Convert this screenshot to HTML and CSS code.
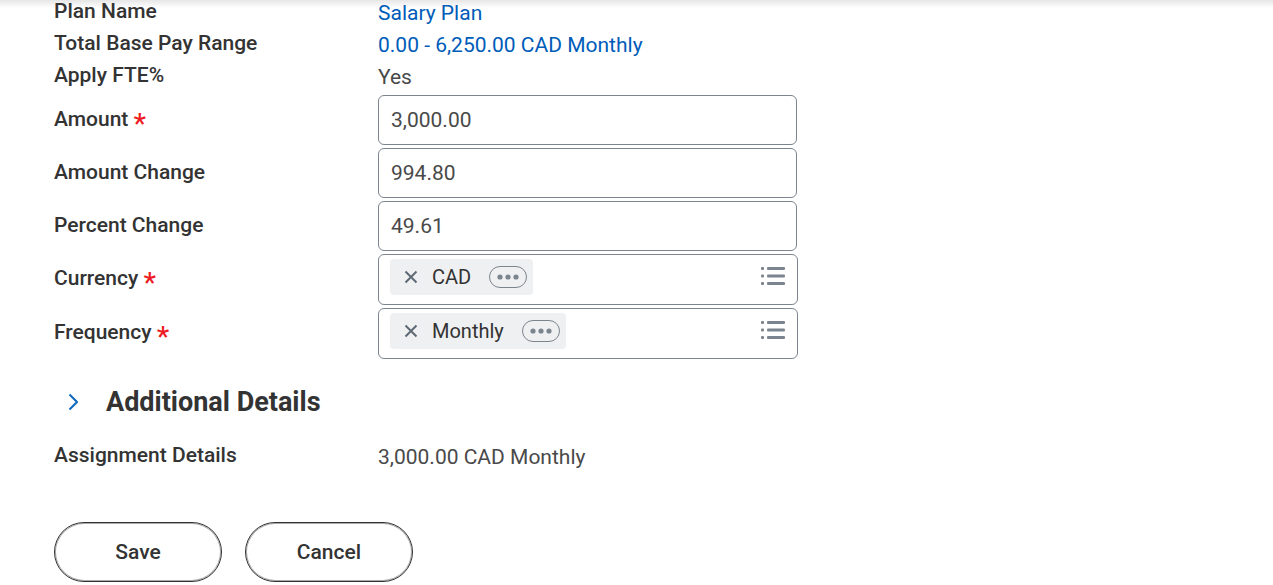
FILE: index.html
```html
<!DOCTYPE html>
<html lang="en">
<head>
    <meta charset="UTF-8">
    <title>Salary Plan</title>
    <link rel="stylesheet" href="styles.css">
</head>
<body>
<svg class="defs" aria-hidden="true">
    <symbol id="remove" viewBox="0 0 14 14">
        <path d="M1.5 1.5l11 11M12.5 1.5l-11 11" fill="none" stroke="#5e6a75" stroke-width="2"/>
    </symbol>
    <symbol id="dots" viewBox="0 0 22 6">
        <g fill="#7b858f"><circle cx="3" cy="3" r="2.6"/><circle cx="11" cy="3" r="2.6"/><circle cx="19" cy="3" r="2.6"/></g>
    </symbol>
    <symbol id="list" viewBox="0 0 24 18">
        <g fill="#7b858f">
            <rect width="3" height="3" rx="1"/><rect x="6" width="18" height="3" rx="1"/>
            <rect y="7.5" width="3" height="3" rx="1"/><rect x="6" y="7.5" width="18" height="3" rx="1"/>
            <rect y="15" width="3" height="3" rx="1"/><rect x="6" y="15" width="18" height="3" rx="1"/>
        </g>
    </symbol>
</svg>
<div class="shadow"></div>
<form class="plan">
    <div class="row">
        <span class="label">Plan Name</span>
        <a class="value" href="#">Salary Plan</a>
    </div>
    <div class="row">
        <span class="label">Total Base Pay Range</span>
        <a class="value" href="#">0.00 - 6,250.00 CAD Monthly</a>
    </div>
    <div class="row">
        <span class="label">Apply FTE%</span>
        <span class="value">Yes</span>
    </div>
    <div class="row field">
        <label class="label" for="amount">Amount <span class="required">*</span></label>
        <input class="box" id="amount" type="text" value="3,000.00">
    </div>
    <div class="row field">
        <label class="label" for="amount-change">Amount Change</label>
        <input class="box" id="amount-change" type="text" value="994.80">
    </div>
    <div class="row field">
        <label class="label" for="percent-change">Percent Change</label>
        <input class="box" id="percent-change" type="text" value="49.61">
    </div>
    <div class="row field">
        <span class="label" id="currency">Currency <span class="required">*</span></span>
        <div class="box prompt" role="group" aria-labelledby="currency">
            <div class="pill">
                <button class="icon" type="button" aria-label="Remove CAD"><svg width="14" height="14"><use href="#remove"/></svg></button>
                <span class="name">CAD</span>
                <button class="icon more" type="button" aria-label="Related actions"><svg width="22" height="6"><use href="#dots"/></svg></button>
            </div>
            <button class="icon" type="button" aria-label="Currency options"><svg width="24" height="18"><use href="#list"/></svg></button>
        </div>
    </div>
    <div class="row field">
        <span class="label" id="frequency">Frequency <span class="required">*</span></span>
        <div class="box prompt" role="group" aria-labelledby="frequency">
            <div class="pill">
                <button class="icon" type="button" aria-label="Remove Monthly"><svg width="14" height="14"><use href="#remove"/></svg></button>
                <span class="name">Monthly</span>
                <button class="icon more" type="button" aria-label="Related actions"><svg width="22" height="6"><use href="#dots"/></svg></button>
            </div>
            <button class="icon" type="button" aria-label="Frequency options"><svg width="24" height="18"><use href="#list"/></svg></button>
        </div>
    </div>
    <h2 class="heading">
        <button class="toggle" type="button" aria-expanded="false">
            <svg width="10" height="18" viewBox="0 0 10 18"><path d="M1.5 1.5L9 9L1.5 16.5" fill="none" stroke="#0f68be" stroke-width="2"/></svg>
            Additional Details
        </button>
    </h2>
    <div class="row">
        <span class="label">Assignment Details</span>
        <span class="value">3,000.00 CAD Monthly</span>
    </div>
    <div class="buttons">
        <button class="btn" type="button">Save</button>
        <button class="btn" type="button">Cancel</button>
    </div>
</form>
</body>
</html>
```

FILE: styles.css
```css
*{
    box-sizing: border-box;
}
body{
    margin: 0;
    background: #fff;
    color: #333;
    font: 21px/28px Roboto, sans-serif;
}
button,input{
    font: inherit;
    color: inherit;
}
.defs{
    display: none;
}
.shadow{
    position: absolute;
    top: 0;
    left: 0;
    right: 0;
    height: 8px;
    background: linear-gradient(#e6e6e6, #fff);
    z-index: -1;
}
.plan{
    display: flex;
    flex-direction: column;
    gap: 3px;
    margin-top: -1px;
    padding: 0 54px;
}
.row{
    display: grid;
    grid-template-columns: 324px minmax(0, 420px);
}
.label{
    height: 29px;
    line-height: 24px;
    font-weight: 500;
}
.field .label{
    padding-top: 12px;
}
.required{
    color: #ed1c24;
    font-size: 28px;
    line-height: 20px;
    vertical-align: -7px;
}
.value{
    color: #494949;
    text-decoration: none;
}
a.value{
    color: #005cb9;
}
.box{
    width: calc(100% - 1px);
    height: 50px;
    padding: 0 12px;
    border: 1px solid #7b858f;
    border-radius: 6px;
    background: #fff;
    color: #494949;
}
.prompt{
    display: flex;
    align-items: flex-start;
    justify-content: space-between;
    width: 100%;
    height: 51px;
    padding: 4px 12px 0 11px;
}
.pill{
    display: flex;
    align-items: center;
    height: 36px;
    padding: 0 6px 0 14px;
    border-radius: 4px;
    background: #eff0f2;
    color: #333;
}
.name{
    margin: 0 18px 0 14px;
    font-size: 20px;
}
.icon{
    display: flex;
    align-items: center;
    justify-content: center;
    padding: 0;
    border: 0;
    background: none;
}
.more{
    width: 38px;
    height: 22px;
    border: 1px solid #7b858f;
    border-radius: 11px;
}
.prompt > .icon{
    height: 34px;
}
.heading{
    margin: 24px 0 22px;
    font-size: 27px;
    line-height: 32px;
    font-weight: 700;
}
.toggle{
    display: flex;
    align-items: center;
    gap: 28px;
    padding: 0 0 0 14px;
    border: 0;
    background: none;
}
.buttons{
    display: flex;
    gap: 23px;
    padding-top: 47px;
}
.btn{
    width: 168px;
    height: 60px;
    border: 1px solid #333;
    border-radius: 30px;
    background: #fff;
    box-shadow: inset 0 0 0 1px #aaa;
    font-weight: 500;
}
```
